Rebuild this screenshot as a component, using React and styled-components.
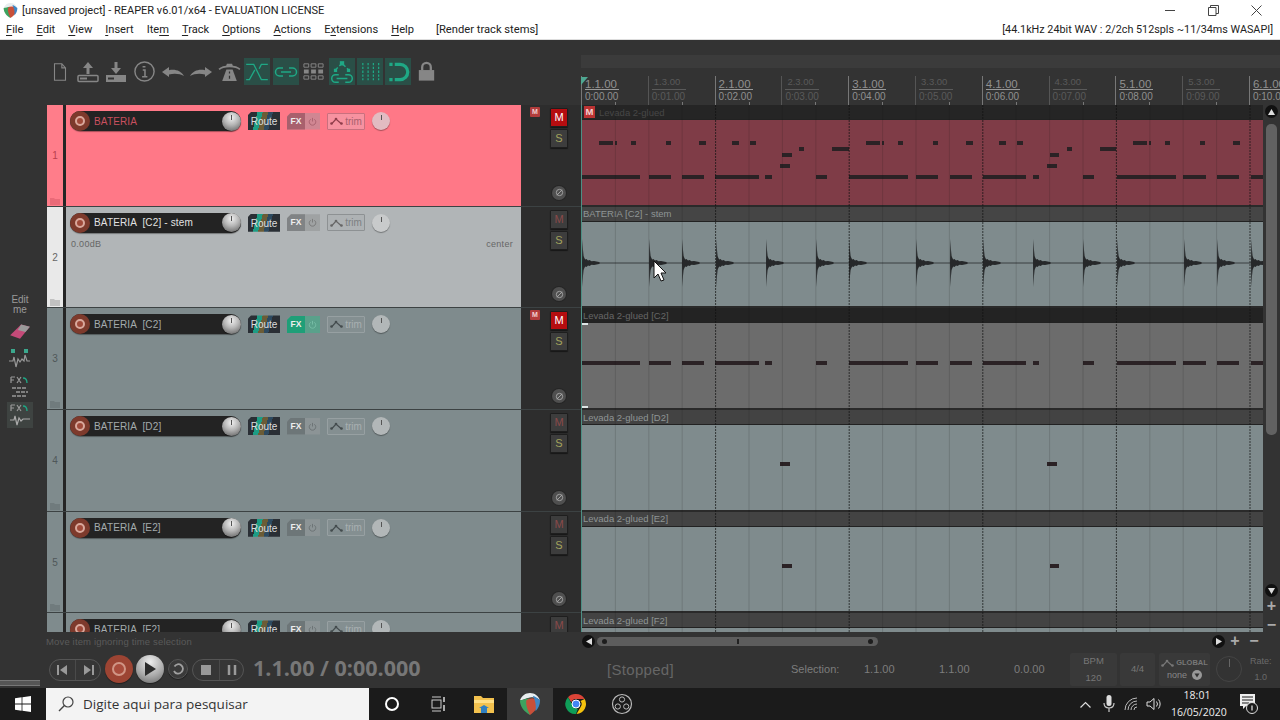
import React from "react";
import styled, { createGlobalStyle } from "styled-components";

const Global = createGlobalStyle`
  html, body { margin: 0; padding: 0; background: #333; }
  * { box-sizing: border-box; }
  svg { display: block; }
`;

const UI = `"Open Sans", "Noto Sans", "Liberation Sans", sans-serif`;
const WIN = `Roboto, "Liberation Sans", sans-serif`;
const TH = `"Liberation Sans", Arial, sans-serif`;
const LANE_H = 101.7;

const Page = styled.div`
  width: 1280px; height: 720px; overflow: hidden; display: flex; flex-direction: column;
  background: #333; font-family: ${TH};
`;
const TitleBar = styled.div`
  height: 20px; background: #fff; display: flex; align-items: center; color: #222;
  font: 11px ${WIN}; padding-left: 3px;
`;
const TitleText = styled.span` margin-left: 4px; flex: 1; white-space: nowrap; `;
const WinBtn = styled.div` width: 43px; height: 20px; display: flex; align-items: center; justify-content: center; `;
const WinBtns = styled.div` display: flex; margin-right: 2.5px; `;
const MenuBar = styled.div`
  height: 20px; background: #fff; display: flex; align-items: center; color: #222;
  font: 11.1px ${WIN}; padding-left: 6px; gap: 13px; border-bottom: 1px solid #ddd;
`;
const Mn = styled.span` text-decoration: underline; text-underline-offset: 2px; `;
const RenderTag = styled.span` margin-left: 9px; font-size: 11.2px; `;
const DeviceTag = styled.span` margin-left: auto; margin-right: 7px; font-size: 10.8px; white-space: nowrap; `;

const Main = styled.div` display: flex; height: 592px; `;
const Sidebar = styled.div`
  width: 47px; flex: none; padding-top: 255px; display: flex; flex-direction: column; align-items: center;
  padding-right: 7px; background: #333;
`;
const EditMe = styled.div` font: 10px/10px ${TH}; color: #999; text-align: center; margin-bottom: 3px; `;
const SideIcon = styled.div`
  width: 26px; height: 26px; display: flex; align-items: center; justify-content: center; margin-bottom: 2px;
  background: ${p => p.$on ? "#3e4341" : "transparent"};
`;
const MidCol = styled.div` width: 534px; flex: none; display: flex; flex-direction: column; `;
const Toolbar = styled.div` height: 65px; flex: none; display: flex; gap: 2.2px; padding-top: 18px; align-items: flex-start; `;
const ToolBtn = styled.div`
  width: 26px; height: 27px; display: flex; align-items: center; justify-content: center;
  background: ${p => p.$on ? "#2a4f47" : "transparent"};
`;
const TrackList = styled.div` height: 527px; overflow: hidden; background: #2d2d2d; `;
const TrackRow = styled.div` height: ${LANE_H}px; display: flex; border-bottom: 1px solid #3c4243; `;
const NumCol = styled.div`
  width: 16px; flex: none; background: ${p => p.$bg}; color: ${p => p.$fg}; position: relative;
  font: 10px ${TH}; display: flex; align-items: center; justify-content: center;
`;
const FolderMark = styled.svg` position: absolute; left: 3px; bottom: 1px; `;
const Divider = styled.div` width: 3px; flex: none; background: #252525; `;
const Panel = styled.div`
  width: 455px; flex: none; background: ${p => p.$bg}; padding: 6px 0 0 4px; display: flex; flex-direction: column;
`;
const Controls = styled.div` display: flex; align-items: center; height: 20px; `;
const NamePill = styled.div`
  width: 171px; height: 20px; flex: none; border-radius: 10px; background: #232323; display: flex; align-items: center;
  box-shadow: 0 1px 1px rgba(0,0,0,.35);
`;
const Arm = styled.div`
  width: 20px; height: 20px; flex: none; border-radius: 50%; background: #7d3a2c; display: flex; align-items: center; justify-content: center;
`;
const ArmDot = styled.div` width: 10px; height: 10px; border-radius: 50%; border: 2.5px solid #d9a89c; background: #a04a3a; `;
const TrackName = styled.span`
  flex: 1; margin-left: 4px; font: 10px ${TH}; color: ${p => p.$fg}; white-space: pre; letter-spacing: .15px;
`;
const Knob = styled.div`
  width: ${p => p.$s || 19}px; height: ${p => p.$s || 19}px; flex: none; border-radius: 50%; position: relative;
  background: ${p => p.$flat ? p.$flat : "radial-gradient(circle at 50% 30%, #f0f0f0 0%, #b5b5b5 45%, #555 100%)"};
  box-shadow: 0 1px 1px rgba(0,0,0,.35);
  &::after { content: ""; position: absolute; left: 50%; top: 3px; width: 1px; height: 5px; margin-left: -.5px; background: #555; }
`;
const RouteBtn = styled.div`
  width: 32px; height: 18px; flex: none; margin-left: 7px; color: #ddd; font: 10px/19px ${TH}; text-align: center;
  background: linear-gradient(105deg, #2a2f35 0 26%, #1d9c84 26% 40%, #6b5c36 40% 55%, #2d4a60 55% 68%, #2a2f35 68%);
  clip-path: polygon(3px 0, 100% 0, 100% 100%, 0 100%, 0 3px);
`;
const FxBtn = styled.div`
  width: 33px; height: 17px; flex: none; margin-left: 7px; display: flex; background: ${p => p.$side};
  clip-path: polygon(4px 0, 100% 0, 100% 100%, 0 100%, 0 4px);
`;
const FxLabel = styled.div`
  width: 18px; background: ${p => p.$bg}; color: #eee; font: bold 8.5px/17px ${TH}; text-align: center;
`;
const FxPower = styled.div` flex: 1; display: flex; align-items: center; justify-content: center; `;
const TrimBtn = styled.div`
  width: 38px; height: 17px; flex: none; margin-left: 7px; display: flex; align-items: center; justify-content: center; gap: 2px;
  background: ${p => p.$bg}; border: 1px solid ${p => p.$line}; color: ${p => p.$fg}; font: 10px ${TH}; border-radius: 1px;
`;
const PanWrap = styled.div` margin-left: 7px; `;
const MeterRow = styled.div`
  display: flex; justify-content: space-between; font: 9px ${TH}; color: #666; letter-spacing: .3px;
  padding: 6px 8px 0 1px;
`;
const MixCol = styled.div`
  width: 60px; flex: none; position: relative; background: #2d2d2d; display: flex; flex-direction: column; align-items: center;
  padding: 3px 0 6px 16px;
`;
const MuteTag = styled.div`
  position: absolute; left: 9px; top: 2px; width: 10px; height: 10px; background: #b23c3c; color: #f2d0d0;
  font: bold 7px/10px ${TH}; text-align: center; border-radius: 1px;
`;
const MS = styled.div`
  width: 18px; height: 19px; margin-bottom: 2px; border: 1px solid #1e1e1e; border-radius: 1px;
  background: ${p => p.$on ? "#b50d10" : "#3d3d3d"}; color: ${p => p.$fg};
  font: 11px/17px ${TH}; text-align: center; box-shadow: 0 1px 1px rgba(0,0,0,.5);
`;
const Phase = styled.div`
  margin-top: auto; width: 14px; height: 14px; border-radius: 50%; background: #4f4f4f; display: flex; align-items: center; justify-content: center;
  box-shadow: 0 0 0 1px #262626;
`;

const ArrCol = styled.div` width: 699px; flex: none; display: flex; flex-direction: column; `;
const TopGap = styled.div` height: 36px; padding-top: 15px; flex: none; `;
const Band = styled.div` height: 13px; background: #3b3b3b; `;
const Ruler = styled.div` height: 29px; flex: none; display: flex; background: #333; position: relative; overflow: hidden; `;
const CursorFlag = styled.svg` position: absolute; left: 0; top: 1px; `;
const RulerCell = styled.div`
  width: 66.8px; flex: none; border-left: 1px solid ${p => p.$major ? "#777" : "#555"}; padding-left: 3px; position: relative;
  color: ${p => p.$major ? "#909090" : "#5a5a5a"};
  &::after { content: ""; position: absolute; left: 33px; bottom: 0; width: 1px; height: 3px; background: #777; }
`;
const BarLabel = styled.div`
  font: ${p => p.$major ? "11.5px/12px" : "9.5px/10px"} ${TH}; height: 14px; padding-top: ${p => p.$major ? "2px" : "1px"}; white-space: nowrap;
  width: 34px; border-bottom: 1px solid ${p => p.$major ? "#999" : "#5a5a5a"}; padding-left: ${p => p.$major ? "0" : "2px"};
`;
const TimeLabel = styled.div` font: 10px/13px ${TH}; white-space: nowrap; `;
const LanesRow = styled.div` height: 527px; flex: none; display: flex; `;
const Lanes = styled.div` width: 682px; flex: none; position: relative; overflow: hidden; background: #2d2d2d; border-left: 1px solid #4d8f84; `;
const Lane = styled.div` height: ${LANE_H}px; display: flex; flex-direction: column; border-bottom: 2px solid #2a2a2a; position: relative; `;
const ClipHead = styled.div`
  height: 15px; flex: none; background: ${p => p.$bg}; color: ${p => p.$fg}; font: 9.5px/15px ${TH}; padding-left: 1px;
  display: flex; align-items: center; gap: 4px; border-bottom: 1px solid #222;
`;
const ClipM = styled.span` width: 11px; height: 12px; background: #b33; color: #f3d0d0; font: bold 9.5px/12px ${TH}; text-align: center; margin-left: 1px; `;
const ClipBody = styled.div` flex: 1; background: ${p => p.$bg}; position: relative; overflow: hidden; `;
const Handle = styled.div`
  position: absolute; left: 0; ${p => p.$bottom ? "bottom: 0;" : "top: 0;"} width: 6px; height: 2px; background: #dfe6e6;
`;
const GridLines = styled.svg` position: absolute; left: 0; top: 0; pointer-events: none; `;
const Pointer = styled.svg` position: absolute; left: 71px; top: 155px; `;
const VScroll = styled.div` width: 17px; flex: none; display: flex; flex-direction: column; align-items: center; `;
const ScrollDot = styled.div`
  width: 13px; height: 13px; flex: none; border-radius: 50%; background: #111; display: flex; align-items: center; justify-content: center;
`;
const VThumb = styled.div` width: 11px; height: 311px; margin-top: 6px; background: #626262; border-radius: 5px; `;
const VDown = styled(ScrollDot)` margin-bottom: 2px; `;
const ZoomGlyph = styled.div` color: #aaa; font: bold 16px/14px ${TH}; height: 19px; flex: none; text-align: center; `;
const ZoomLast = styled(ZoomGlyph)` margin-bottom: -5px; `;
const VSpace = styled.div` flex: 1; `;

const Footer = styled.div` height: 18px; flex: none; display: flex; align-items: center; `;
const StatusMsg = styled.div` width: 581px; flex: none; padding: 0 0 0 46px; color: #5a5a5a; font: 9.5px ${TH}; letter-spacing: .15px; `;
const HScroll = styled.div` flex: 1; display: flex; align-items: center; padding-left: 1px; `;
const HThumb = styled.div`
  width: 281px; height: 9px; margin-left: 2px; border-radius: 5px; background: #5d5d5d; position: relative; display: flex; align-items: center; justify-content: space-between; padding: 0 5px;
`;
const ThumbDot = styled.div` width: 5px; height: 5px; border-radius: 50%; background: #1d1d1d; `;
const ThumbMark = styled.div` position: absolute; left: 140px; top: 2px; width: 2px; height: 5px; background: #222; `;
const HEnd = styled.div` margin-left: auto; display: flex; align-items: center; gap: 5px; padding-right: 19px; `;
const HDot = styled(ScrollDot)` margin-right: -2px; `;
const HGlyph = styled.div` color: #aaa; font: bold 16px/14px ${TH}; width: 14px; text-align: center; `;

const Transport = styled.div` height: 38px; flex: none; display: flex; align-items: center; `;
const Grip = styled.div` width: 40px; height: 6px; align-self: flex-end; margin: 0 9px 2px 0; border-top: 1px solid #777; border-bottom: 1px solid #777; background: #555; `;
const Pill = styled.div`
  display: flex; height: 22px; border: 1px solid #555; border-radius: 11px; background: #363636; flex: none; margin-top: 1px;
  margin-left: ${p => p.$ml || 0}px;
`;
const PillCell = styled.div`
  width: ${p => p.$w}px; display: flex; align-items: center; justify-content: center;
  & + & { border-left: 1px solid #4a4a4a; }
`;
const RoundBtn = styled.div`
  width: ${p => p.$s}px; height: ${p => p.$s}px; border-radius: 50%; flex: none; margin-left: ${p => p.$ml}px; display: flex; align-items: center; justify-content: center;
  background: ${p => p.$bg}; box-shadow: 0 1px 1px rgba(0,0,0,.4);
  border: ${p => p.$line ? `1px solid ${p.$line}` : "none"};
`;
const RecDot = styled.div` width: 14px; height: 14px; border-radius: 50%; border: 2.5px solid #d09585; background: #a94c3c; `;
const TimeDisplay = styled.div` width: 354px; flex: none; margin-left: 9px; color: #777; font: bold 21.5px/24px "Open Sans", ${TH}; white-space: nowrap; margin-top: -2px; `;
const Stopped = styled.div` width: 184px; flex: none; color: #666; font: 15px ${TH}; letter-spacing: .3px; `;
const Sel = styled.div` width: ${p => p.$w}px; flex: none; color: ${p => p.$fg || "#7d7d7d"}; font: 11px ${TH}; `;
const InfoBox = styled.div`
  width: ${p => p.$w}px; height: 33px; flex: none; margin-left: ${p => p.$ml}px; background: #393939; color: #777; font: 9.5px/14px ${TH};
  display: flex; flex-direction: column; align-items: center; justify-content: center; gap: 3px; border-radius: 2px;
`;
const GlobalTop = styled.div` display: flex; align-items: center; gap: 2px; font: bold 7.5px ${TH}; color: #777; `;
const GlobalBottom = styled.div` display: flex; align-items: center; gap: 5px; font: 9px ${TH}; color: #888; `;
const RateKnob = styled.div`
  width: 26px; height: 26px; flex: none; margin-left: 6px; border-radius: 50%; border: 1px solid #444; position: relative;
  &::after { content: ""; position: absolute; left: 12px; top: 2px; width: 1px; height: 8px; background: #666; }
`;
const RateCell = styled.div` margin-left: 8px; color: #6a6a6a; font: 9px/16px ${TH}; text-align: center; `;

const Taskbar = styled.div` height: 32px; flex: none; background: #1b1b1b; display: flex; align-items: stretch; `;
const StartBtn = styled.div` width: 46px; display: flex; align-items: center; justify-content: center; `;
const SearchBox = styled.div`
  width: 323px; background: #f3f3f3; display: flex; align-items: center; padding-left: 12px; gap: 9px;
  color: #333; font: 13.5px ${UI};
`;
const TaskIcon = styled.div`
  width: 46px; display: flex; align-items: center; justify-content: center; background: ${p => p.$on ? "#3a3a3a" : "transparent"};
`;
const Tray = styled.div` margin-left: auto; display: flex; align-items: center; padding-right: 11px; `;
const TrayIcon = styled.div` width: 23px; display: flex; align-items: center; justify-content: center; `;
const Clock = styled.div` width: 52px; margin-left: 5px; color: #eee; font: 10.5px/17px ${UI}; text-align: center; white-space: nowrap; `;
const Notif = styled.div` width: 40px; margin-left: 6px; display: flex; align-items: center; justify-content: center; `;

/* ---------- drawings ---------- */
const G = "#868686", T = "#1fa885";
const Ico = ({ children, s = 22 }) => <svg width={s} height={s} viewBox="0 0 24 24">{children}</svg>;

const tools = [
  [false, <Ico><path d="M6 3h8l4 4.5V21H6z M14 3v4.5h4" fill="none" stroke={G} strokeWidth="1.2" /></Ico>],
  [false, <Ico s={24}><path d="M12 2l-5 6h3.5v6h3V8H17z" fill={G} /><rect x="2" y="15.5" width="20" height="6" rx="1" fill="none" stroke={G} strokeWidth="1.5" /><rect x="4" y="17.5" width="7" height="2" fill={G} /></Ico>],
  [false, <Ico s={24}><path d="M12 14l5-6h-3.5V2h-3v6H7z" fill={G} /><rect x="2" y="15" width="20" height="7" fill={G} /><rect x="4" y="17.5" width="6" height="2" fill="#333" /></Ico>],
  [false, <Ico s={23}><circle cx="12" cy="12" r="10" fill="none" stroke={G} strokeWidth="1.5" /><path d="M10 7h3v0 M10.2 10.5h2.3V17 M9.500 17.500h5.500" fill="none" stroke={G} strokeWidth="1.600" /></Ico>],
  [false, <Ico s={24}><path d="M1 12l7-5v3.2c6-1.4 12 .5 15 5.800-4-2.200-9-3-15-1.600V17z" fill={G} /></Ico>],
  [false, <Ico s={24}><path d="M23 12l-7-5v3.200C10 8.800 4 10.700 1 16c4-2.200 9-3 15-1.600V17z" fill={G} /></Ico>],
  [false, <Ico s={25}><path d="M2 10c4-4 16-4 20 0" fill="none" stroke={G} strokeWidth="1.600" /><path d="M9.500 4.500h5l1 3h-7z" fill={G} /><path d="M9 10h6l4 11H5z" fill={G} /><path d="M12 12v2 M12 16v3" stroke="#333" strokeWidth="1.200" /></Ico>],
  [true, <Ico s={26}><path d="M2 5h7l7 14h6 M2 19h3l5-9 M14 9l2-4h6" fill="none" stroke={T} strokeWidth="1.200" /></Ico>],
  [true, <Ico s={24}><path d="M9 8H5.500a4 4 0 000 8H9 M15 8h3.500a4 4 0 010 8H15 M7 12h10" fill="none" stroke={T} strokeWidth="1.500" /></Ico>],
  [false, <Ico s={23}><path d="M2 4h5v3.500H2z M9.500 4h5v3.500h-5z M17 4h5v3.500h-5z M2 16.500h5V20H2z M9.500 16.500h5V20h-5z M17 16.500h5V20h-5z" fill="none" stroke={G} strokeWidth="1" /><path d="M2 10h5v4H2z M9.500 10h5v4h-5z M17 10h5v4h-5z" fill={G} /></Ico>],
  [true, <Ico s={26}><path d="M6 10l6-6 6 6" fill="none" stroke={T} strokeWidth="1.300" strokeDasharray="3 2" /><rect x="10" y="2" width="4" height="4" fill={T} /><rect x="4.500" y="9" width="3" height="3" fill={T} /><rect x="16.500" y="9" width="3" height="3" fill={T} /><path d="M9 14.500H6a3.500 3.500 0 000 7h3 M15 14.500h3a3.500 3.500 0 010 7h-3 M7 18h10" fill="none" stroke={T} strokeWidth="1.400" /></Ico>],
  [true, <Ico s={23}><path d="M4 3v18 M9.500 3v18 M15 3v18 M20.500 3v18" stroke={T} strokeWidth="1.300" strokeDasharray="2.500 1.500" /></Ico>],
  [true, <Ico s={26}><path d="M9 5h5a7 7 0 010 14H9" fill="none" stroke={T} strokeWidth="3" /><path d="M4 5h3 M4 19h3" stroke={T} strokeWidth="3" /></Ico>],
  [false, <Ico s={23}><path d="M7.500 11V7.500a4.500 4.500 0 019 0V11" fill="none" stroke={G} strokeWidth="2.400" /><rect x="4" y="10.500" width="16" height="11" fill={G} /></Ico>],
];

const ReaperLogo = ({ s = 15 }) => (
  <svg width={s} height={s} viewBox="0 0 24 24">
    <path d="M1 8C3 3 7 0 12 0c5 0 9 3 11 8-3-3-7-4-11-3C7 6 4 8 1 8z" fill="#e9eef0" />
    <path d="M1 8c3 0 6-2 10-2 1 6 1 12 1 18C6 21 1 15 1 8z" fill="#3ea35f" />
    <path d="M8 8c3-3 10-3 13 0 2 6-3 12-9 16-2-5-5-10-4-16z" fill="#c8503a" />
    <path d="M15 3c3 1 6 3 8 5 0 5-2 9-5 12 1-6 0-12-3-17z" fill="#3f86c4" />
  </svg>
);

const MiniPower = ({ c }) => (
  <svg width="9" height="9" viewBox="0 0 10 10"><path d="M3 2.500a3.600 3.600 0 104 0 M5 1v4" fill="none" stroke={c} strokeWidth="1" /></svg>
);
const EnvIcon = ({ c }) => (
  <svg width="13" height="8" viewBox="0 0 13 8">
    <path d="M1.500 7L6 2l5.500 5" fill="none" stroke={c} strokeWidth="1.200" />
    <circle cx="1.500" cy="6.500" r="1.300" fill={c} /><circle cx="6" cy="2" r="1.300" fill={c} /><circle cx="11.500" cy="6.500" r="1.300" fill={c} />
  </svg>
);

const bar142 = [[17, 31], [33, 35], [49, 54], [84, 89], [117, 124], [150, 157], [168, 174]];
const notes1 = [
  ...[0, 267, 534].flatMap(o => bar142.map(([a, b]) => [a + o, b + o, 21])),
  [217, 222, 27], [250, 267, 27], [485, 490, 27], [518, 534, 27],
  [200, 210, 33], [468, 477, 33],
  [198, 208, 44], [465, 475, 44],
];
const kick = [[0, 58], [67, 89], [100, 122], [133, 177], [183, 190], [234, 245], [267, 326], [334, 356], [368, 390], [401, 444], [451, 457], [501, 512], [535, 594], [601, 624], [635, 657], [669, 682]];
const Notes = ({ items, h }) => (
  <svg width="682" height={h}>
    {items.map(([a, b, y], i) => <rect key={i} x={a} y={y} width={b - a} height="4" fill="#2b2225" />)}
  </svg>
);
const hits = [0, 67, 100, 134, 184, 234, 267, 334, 368, 401, 451, 501, 535, 602, 635, 669];
const c = 41;
const hitD = x => {
  const up = [[0.4, 24], [1, 13], [1.6, 7], [2.4, 5], [3.2, 3.5], [4.5, 4], [6, 2.5], [7.5, 3], [9.5, 1.8], [12, 2], [14.5, 1.6], [17, 1]];
  const top = up.map(([d, a]) => `${x + d},${c - a}`).join(" L");
  const bot = up.slice().reverse().map(([d, a]) => `${x + d},${c + a}`).join(" L");
  return `M${x},${c} L${top} L${x + 18},${c} L${bot} Z`;
};
const Wave = () => (
  <svg width="682" height="84">
    <line x1="0" x2="682" y1={c} y2={c} stroke="#3a3f40" strokeWidth="1" />
    {hits.map(x => <path key={x} d={hitD(x)} fill="#26282a" />)}
  </svg>
);
const GridSvg = () => {
  const out = [];
  for (let i = 1; i < 21; i++) {
    const x = i * 33.4;
    const bar = i % 4 === 0;
    out.push(<line key={i} x1={x} x2={x} y1="0" y2="527" stroke="#111" strokeOpacity={bar ? 0.7 : 0.15} strokeWidth="1" strokeDasharray={bar ? "2 1" : undefined} />);
  }
  return <GridLines width="682" height="527">{out}</GridLines>;
};

const TONES = {
  pink: { bg: "#ff7887", num: "#ff7d8a", numFg: "#b8404e", name: "#c9505f", fx: "#a8606d", side: "#d08692", pw: "#a8606d", trim: "#f792a0", line: "#c9707e", tf: "#a8606d", env: "#8f3d4a", pan: "#e2bcc2" },
  light: { bg: "#b1b5b7", num: "#e9e9e9", numFg: "#666", name: "#e2e2e2", fx: "#808385", side: "#9fa2a3", pw: "#777", trim: "#aeb2b4", line: "#8d9193", tf: "#7c8082", env: "#666", pan: "#c8cacb" },
  dark: { bg: "#7f8b8d", num: "#7f8b8d", numFg: "#4f5759", name: "#a3abad", fx: "#6d7678", side: "#8c9496", pw: "#6a7173", trim: "#848f91", line: "#97a0a2", tf: "#a9b0b2", env: "#444c4e", pan: "#b2b7b8" },
};
const tracks = [
  { n: 1, name: "BATERIA", tone: "pink", on: true, tag: true, mFg: "#fff" },
  { n: 2, name: "BATERIA  [C2] - stem", tone: "light", meter: true, mFg: "#8a4a4a" },
  { n: 3, name: "BATERIA  [C2]", tone: "dark", on: true, tag: true, fxOn: true, mFg: "#fff" },
  { n: 4, name: "BATERIA  [D2]", tone: "dark", mFg: "#8a4a4a" },
  { n: 5, name: "BATERIA  [E2]", tone: "dark", mFg: "#8a4a4a" },
  { n: 6, name: "BATERIA  [F2]", tone: "dark", mFg: "#8a4a4a" },
];
const lanes = [
  { head: "#252525", fg: "#474747", label: "Levada 2-glued", m: true, body: "#7f3c47", h: 85, notes: notes1.concat(kick.map(([a, b]) => [a, b, 55])) },
  { head: "#454545", fg: "#8f9595", label: "BATERIA [C2] - stem", body: "#7f8b8d", wave: true },
  { head: "#232323", fg: "#666", label: "Levada 2-glued [C2]", body: "#6c6c6c", h: 85, handles: true, notes: kick.map(([a, b]) => [a, b, 38]) },
  { head: "#434343", fg: "#8f9595", label: "Levada 2-glued [D2]", body: "#7f8b8d", h: 85, notes: [[198, 208, 37], [465, 475, 37]] },
  { head: "#434343", fg: "#8f9595", label: "Levada 2-glued [E2]", body: "#7f8b8d", h: 85, notes: [[200, 210, 37], [468, 477, 37]] },
  { head: "#434343", fg: "#8f9595", label: "Levada 2-glued [F2]", body: "#7f8b8d", h: 85, notes: [] },
];
const ruler = [
  ["1.1.00", "0:00.00"], ["1.3.00", "0:01.00"], ["2.1.00", "0:02.00"], ["2.3.00", "0:03.00"], ["3.1.00", "0:04.00"], ["3.3.00", "0:05.00"],
  ["4.1.00", "0:06.00"], ["4.3.00", "0:07.00"], ["5.1.00", "0:08.00"], ["5.3.00", "0:09.00"], ["6.1.00", "0:10.00"],
];

const Track = ({ t }) => {
  const s = TONES[t.tone];
  return (
    <TrackRow>
      <NumCol $bg={s.num} $fg={s.numFg}>
        {t.n}
        <FolderMark width="10" height="8" viewBox="0 0 10 8"><path d="M0 1h4l1 1h5v6H0z" fill={s.numFg} opacity=".3" /></FolderMark>
      </NumCol>
      <Divider />
      <Panel $bg={s.bg}>
        <Controls>
          <NamePill>
            <Arm><ArmDot /></Arm>
            <TrackName $fg={s.name}>{t.name}</TrackName>
            <Knob />
          </NamePill>
          <RouteBtn>Route</RouteBtn>
          <FxBtn $side={t.fxOn ? "#5aa18b" : s.side}>
            <FxLabel $bg={t.fxOn ? "#1f9f78" : s.fx}>FX</FxLabel>
            <FxPower><MiniPower c={t.fxOn ? "#79bfa8" : s.pw} /></FxPower>
          </FxBtn>
          <TrimBtn $bg={s.trim} $line={s.line} $fg={s.tf}><EnvIcon c={s.env} />trim</TrimBtn>
          <PanWrap><Knob $flat={s.pan} $s={18} /></PanWrap>
        </Controls>
        {t.meter && <MeterRow><span>0.00dB</span><span>center</span></MeterRow>}
      </Panel>
      <MixCol>
        {t.tag && <MuteTag>M</MuteTag>}
        <MS $on={t.on} $fg={t.mFg}>M</MS>
        <MS $fg="#a3a35c">S</MS>
        <Phase>
          <svg width="9" height="9" viewBox="0 0 10 10"><circle cx="5" cy="5" r="3.500" fill="none" stroke="#aaa" strokeWidth="1" /><path d="M2 8l6-6" stroke="#aaa" strokeWidth="1" /></svg>
        </Phase>
      </MixCol>
    </TrackRow>
  );
};

const SMALL = "#999";
export default function App() {
  return (
    <Page>
      <Global />
      <TitleBar>
        <ReaperLogo />
        <TitleText>[unsaved project] - REAPER v6.01/x64 - EVALUATION LICENSE</TitleText>
        <WinBtns>
          <WinBtn><svg width="11" height="11" viewBox="0 0 11 11"><path d="M0 5.500h10" stroke="#444" /></svg></WinBtn>
          <WinBtn><svg width="11" height="11" viewBox="0 0 11 11"><path d="M.5 2.500h7.500v8H.5z M2.500 2.500v-2h8v8h-2.500" fill="none" stroke="#444" /></svg></WinBtn>
          <WinBtn><svg width="11" height="11" viewBox="0 0 11 11"><path d="M.5.500l10 10 M10.500.500l-10 10" stroke="#444" /></svg></WinBtn>
        </WinBtns>
      </TitleBar>
      <MenuBar>
        <span><Mn>F</Mn>ile</span>
        <span><Mn>E</Mn>dit</span>
        <span><Mn>V</Mn>iew</span>
        <span><Mn>I</Mn>nsert</span>
        <span>Ite<Mn>m</Mn></span>
        <span><Mn>T</Mn>rack</span>
        <span><Mn>O</Mn>ptions</span>
        <span><Mn>A</Mn>ctions</span>
        <span>E<Mn>x</Mn>tensions</span>
        <span><Mn>H</Mn>elp</span>
        <RenderTag>[Render track stems]</RenderTag>
        <DeviceTag>[44.1kHz 24bit WAV : 2/2ch 512spls ~11/34ms WASAPI]</DeviceTag>
      </MenuBar>
      <Main>
        <Sidebar>
          <EditMe>Edit<br />me</EditMe>
          <SideIcon>
            <svg width="24" height="22" viewBox="0 0 22 20"><path d="M2 14L12 4l8 2-9 11z" fill="#c44a78" /><path d="M12 4l8 2-4 5-7-2z" fill="#9a9a9a" /></svg>
          </SideIcon>
          <SideIcon>
            <svg width="24" height="24" viewBox="0 0 24 24"><rect x="3" y="2" width="4" height="4" fill="#3ba88d" /><rect x="16" y="2" width="4" height="4" fill="#3ba88d" /><path d="M1 14h4l1-4 2 10 2-8 2 3 2-3 2 2 1-6 2 6h3" fill="none" stroke="#999" strokeWidth="1.200" /></svg>
          </SideIcon>
          <SideIcon>
            <svg width="24" height="24" viewBox="0 0 24 24"><path d="M3 2v6 M3 2h4 M3 5h3 M9 2l4 6 M13 2l-4 6" stroke="#999" strokeWidth="1.200" fill="none" /><path d="M15 3c3 0 4 2 4 5" stroke={T} strokeWidth="1.300" fill="none" /><path d="M4 13h14 M8 17h12 M4 21h14" stroke="#999" strokeWidth="1.300" strokeDasharray="4 1" /></svg>
          </SideIcon>
          <SideIcon $on>
            <svg width="24" height="24" viewBox="0 0 24 24"><path d="M3 2v6 M3 2h4 M3 5h3 M9 2l4 6 M13 2l-4 6" stroke="#999" strokeWidth="1.200" fill="none" /><path d="M15 3c3 0 4 2 4 5" stroke={T} strokeWidth="1.300" fill="none" /><path d="M2 17h4l1-4 2 9 2-7 2 3 2-2h7" stroke="#aaa" strokeWidth="1.200" fill="none" /></svg>
          </SideIcon>
        </Sidebar>
        <MidCol>
          <Toolbar>
            {tools.map(([on, icon], i) => <ToolBtn key={i} $on={on}>{icon}</ToolBtn>)}
          </Toolbar>
          <TrackList>
            {tracks.map(t => <Track key={t.n} t={t} />)}
          </TrackList>
        </MidCol>
        <ArrCol>
          <TopGap><Band /></TopGap>
          <Ruler>
            {ruler.map(([b, tm], i) => {
              const major = i % 2 === 0;
              return (
                <RulerCell key={b} $major={major}>
                  <BarLabel $major={major}>{b}</BarLabel>
                  <TimeLabel>{tm}</TimeLabel>
                </RulerCell>
              );
            })}
            <CursorFlag width="7" height="9" viewBox="0 0 7 9"><path d="M0 0h7L0 8z" fill="#4fa792" /></CursorFlag>
          </Ruler>
          <LanesRow>
            <Lanes>
              {lanes.map((l, i) => (
                <Lane key={i}>
                  <ClipHead $bg={l.head} $fg={l.fg}>{l.m && <ClipM>M</ClipM>}{l.label}</ClipHead>
                  <ClipBody $bg={l.body}>
                    {l.wave ? <Wave /> : <Notes items={l.notes} h={l.h} />}
                    {l.handles && <><Handle /><Handle $bottom /></>}
                  </ClipBody>
                </Lane>
              ))}
              <GridSvg />
              <Pointer width="14" height="22" viewBox="0 0 14 22">
                <path d="M1 1v17l4-4 3 7 3-1-3-7h5z" fill="#fff" stroke="#111" strokeWidth="1" />
              </Pointer>
            </Lanes>
            <VScroll>
              <ScrollDot><svg width="7" height="6" viewBox="0 0 7 6"><path d="M3.500 0L7 6H0z" fill="#ddd" /></svg></ScrollDot>
              <VThumb />
              <VSpace />
              <VDown><svg width="7" height="6" viewBox="0 0 7 6"><path d="M3.500 6L7 0H0z" fill="#ddd" /></svg></VDown>
              <ZoomGlyph>+</ZoomGlyph>
              <ZoomLast>−</ZoomLast>
            </VScroll>
          </LanesRow>
        </ArrCol>
      </Main>
      <Footer>
        <StatusMsg>Move item ignoring time selection</StatusMsg>
        <HScroll>
          <ScrollDot><svg width="6" height="7" viewBox="0 0 6 7"><path d="M0 3.500L6 0v7z" fill="#ddd" /></svg></ScrollDot>
          <HThumb><ThumbDot /><ThumbMark /><ThumbDot /></HThumb>
          <HEnd>
            <HDot><svg width="6" height="7" viewBox="0 0 6 7"><path d="M6 3.500L0 0v7z" fill="#ddd" /></svg></HDot>
            <HGlyph>+</HGlyph>
            <HGlyph>−</HGlyph>
          </HEnd>
        </HScroll>
      </Footer>
      <Transport>
        <Grip />
        <Pill>
          <PillCell $w={25}><svg width="11" height="10" viewBox="0 0 11 10"><path d="M1 0v10" stroke={SMALL} strokeWidth="2" /><path d="M10 0v10L3 5z" fill={SMALL} /></svg></PillCell>
          <PillCell $w={25}><svg width="11" height="10" viewBox="0 0 11 10"><path d="M10 0v10" stroke={SMALL} strokeWidth="2" /><path d="M1 0v10l7-5z" fill={SMALL} /></svg></PillCell>
        </Pill>
        <RoundBtn $s={28} $ml={4} $bg="#9c4433"><RecDot /></RoundBtn>
        <RoundBtn $s={28} $ml={3} $bg="radial-gradient(circle at 50% 25%, #eee, #aaa 55%, #666)">
          <svg width="12" height="14" viewBox="0 0 12 14"><path d="M1 0l11 7-11 7z" fill="#2c2c2c" /></svg>
        </RoundBtn>
        <RoundBtn $s={20} $ml={4} $bg="#3a3a3a" $line="#555">
          <svg width="12" height="12" viewBox="0 0 12 12"><path d="M2.500 3.500a4.500 4.500 0 117 5.500 4.500 4.500 0 01-7.500-1" fill="none" stroke="#a0a0a0" strokeWidth="1.800" /></svg>
        </RoundBtn>
        <Pill $ml={4}>
          <PillCell $w={26}><svg width="10" height="10"><rect width="10" height="10" fill={SMALL} /></svg></PillCell>
          <PillCell $w={24}><svg width="10" height="10"><path d="M2 0v10 M8 0v10" stroke={SMALL} strokeWidth="2.500" /></svg></PillCell>
        </Pill>
        <TimeDisplay>1.1.00 / 0:00.000</TimeDisplay>
        <Stopped>[Stopped]</Stopped>
        <Sel $w={73}>Selection:</Sel>
        <Sel $w={75}>1.1.00</Sel>
        <Sel $w={75}>1.1.00</Sel>
        <Sel $w={56}>0.0.00</Sel>
        <InfoBox $w={47} $ml={0}><span>BPM</span><span>120</span></InfoBox>
        <InfoBox $w={35} $ml={3}>4/4</InfoBox>
        <InfoBox $w={51} $ml={4}>
          <GlobalTop><EnvIcon c="#777" />GLOBAL</GlobalTop>
          <GlobalBottom>none
            <svg width="10" height="10" viewBox="0 0 10 10"><circle cx="5" cy="5" r="5" fill="#999" /><path d="M2.500 3.500h5L5 7.500z" fill="#333" /></svg>
          </GlobalBottom>
        </InfoBox>
        <RateKnob />
        <RateCell>Rate:<br />1.0</RateCell>
      </Transport>
      <Taskbar>
        <StartBtn>
          <svg width="16" height="16" viewBox="0 0 16 16"><path d="M0 2.200L6.600 1.300V7.600H0z M7.400 1.200L16 0V7.600H7.400z M0 8.400h6.600v6.300L0 13.800z M7.400 8.400H16V16L7.400 14.800z" fill="#fff" /></svg>
        </StartBtn>
        <SearchBox>
          <svg width="16" height="16" viewBox="0 0 16 16"><circle cx="10" cy="6" r="5" fill="none" stroke="#444" strokeWidth="1.200" /><path d="M6.400 9.600L1 15" stroke="#444" strokeWidth="1.400" /></svg>
          Digite aqui para pesquisar
        </SearchBox>
        <TaskIcon><svg width="16" height="16" viewBox="0 0 16 16"><circle cx="8" cy="8" r="6" fill="none" stroke="#fff" strokeWidth="2" /></svg></TaskIcon>
        <TaskIcon><svg width="18" height="16" viewBox="0 0 18 16"><path d="M3 1h9 M3 15h9" stroke="#ccc" strokeWidth="1.200" /><rect x="3" y="4" width="9" height="8" fill="none" stroke="#ccc" /><path d="M15 1v5 M15 9v6" stroke="#ccc" strokeWidth="1.600" /></svg></TaskIcon>
        <TaskIcon><svg width="20" height="18" viewBox="0 0 20 18"><path d="M0 1h7l2 2h11v15H0z" fill="#f2c14e" /><rect x="0" y="5" width="20" height="3" fill="#ffdf85" /><path d="M7 13h6v5H7z" fill="#2f7fc1" /><path d="M5 13l5-3 5 3z" fill="#2f7fc1" /></svg></TaskIcon>
        <TaskIcon $on><ReaperLogo s={22} /></TaskIcon>
        <TaskIcon>
          <svg width="22" height="22" viewBox="0 0 22 22">
            <path d="M11 1a10 10 0 018.700 5H11a5 5 0 00-4.700 3.200L3 4.200A10 10 0 0111 1z" fill="#db4437" />
            <path d="M19.700 6A10 10 0 0111.500 21l4-6.800A5 5 0 0015.500 8z" fill="#f4c20d" />
            <path d="M3 4.200l4.200 7.300A5 5 0 0013 15.600L10.900 21A10 10 0 013 4.200z" fill="#0f9d58" />
            <circle cx="11" cy="11" r="4" fill="#4285f4" stroke="#fff" strokeWidth="1" />
          </svg>
        </TaskIcon>
        <TaskIcon>
          <svg width="22" height="22" viewBox="0 0 22 22"><circle cx="11" cy="11" r="9.500" fill="none" stroke="#bbb" strokeWidth="1.200" /><circle cx="11" cy="6.500" r="2.600" fill="none" stroke="#bbb" /><circle cx="6.800" cy="13.500" r="2.600" fill="none" stroke="#bbb" /><circle cx="15.200" cy="13.500" r="2.600" fill="none" stroke="#bbb" /></svg>
        </TaskIcon>
        <Tray>
          <TrayIcon><svg width="11" height="7" viewBox="0 0 11 7"><path d="M.5 6.500l5-5 5 5" fill="none" stroke="#ddd" strokeWidth="1.200" /></svg></TrayIcon>
          <TrayIcon><svg width="12" height="18" viewBox="0 0 12 18"><rect x="3.500" y="0" width="5" height="11" rx="2.500" fill="#ddd" /><path d="M1 8c0 4 2 5 5 5s5-1 5-5 M6 13v4" fill="none" stroke="#ccc" strokeWidth="1.200" /></svg></TrayIcon>
          <TrayIcon><svg width="15" height="14" viewBox="0 0 15 14"><path d="M1 13A12 12 0 0113 1 M4 13A9 9 0 0113 4 M7 13a6 6 0 016-6 M10 13a3 3 0 013-3" fill="none" stroke="#bbb" strokeWidth="1" /></svg></TrayIcon>
          <TrayIcon><svg width="17" height="14" viewBox="0 0 17 14"><path d="M1 5h3l4-3.500v11L4 9H1z" fill="none" stroke="#ddd" strokeWidth="1" /><path d="M10.500 4.500a4 4 0 010 5 M12.500 2.500a7 7 0 010 9" fill="none" stroke="#ddd" strokeWidth="1" /></svg></TrayIcon>
          <Clock>18:01<br />16/05/2020</Clock>
          <Notif>
            <svg width="18" height="20" viewBox="0 0 18 20"><path d="M0 0h15v12H6l-3 3v-3H0z" fill="#eee" /><path d="M2 3h11 M2 6h11 M2 9h7" stroke="#1b1b1b" strokeWidth="1" /><circle cx="12" cy="14" r="5.500" fill="#1b1b1b" stroke="#ddd" /><path d="M12 11.500v5" stroke="#eee" strokeWidth="1.200" /></svg>
          </Notif>
        </Tray>
      </Taskbar>
    </Page>
  );
}
